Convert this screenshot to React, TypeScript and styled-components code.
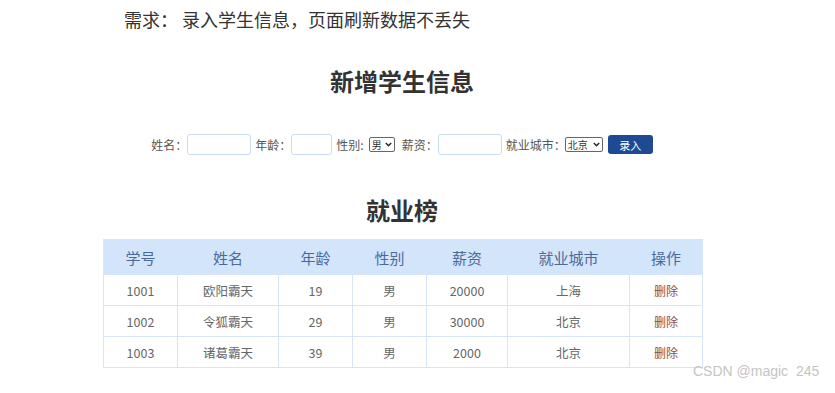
import React from "react";
import styled, { createGlobalStyle } from "styled-components";

const GlobalStyle = createGlobalStyle`
  body {
    margin: 0;
    background: #ffffff;
    font-family: "Noto Sans CJK SC", "Noto Sans", sans-serif;
  }
`;

type Student = {
  id: string;
  name: string;
  age: number;
  gender: string;
  salary: number;
  city: string;
};

const students: Student[] = [
  { id: "1001", name: "欧阳霸天", age: 19, gender: "男", salary: 20000, city: "上海" },
  { id: "1002", name: "令狐霸天", age: 29, gender: "男", salary: 30000, city: "北京" },
  { id: "1003", name: "诸葛霸天", age: 39, gender: "男", salary: 2000, city: "北京" },
];

const columns = [
  { title: "学号", width: 74 },
  { title: "姓名", width: 101 },
  { title: "年龄", width: 74 },
  { title: "性别", width: 74 },
  { title: "薪资", width: 81 },
  { title: "就业城市", width: 122 },
  { title: "操作", width: 73 },
];

const SmallSelect = ({
  width,
  options,
  value,
  ml,
  mr,
}: {
  width: number;
  options: string[];
  value: string;
  ml: number;
  mr: number;
}) => (
  <SelectBox $ml={ml} $mr={mr}>
    <Select $w={width} defaultValue={value}>
      {options.map((o) => (
        <option key={o}>{o}</option>
      ))}
    </Select>
    <Chevron width="7" height="5" viewBox="0 0 7 5">
      <path d="M0.8 1 L3.5 3.7 L6.2 1" fill="none" stroke="#222" strokeWidth="1.4" />
    </Chevron>
  </SelectBox>
);

export default function App() {
  return (
    <Page>
      <GlobalStyle />
      <Content>
        <Requirement>需求： 录入学生信息，页面刷新数据不丢失</Requirement>
        <Title $top={34}>新增学生信息</Title>
        <Form>
          <Field>
            <Label>姓名：</Label>
            <TextInput $w={64} />
          </Field>
          <Field>
            <Label>年龄：</Label>
            <TextInput $w={41} />
          </Field>
          <Field>
            <Label>性别:</Label>
            <SmallSelect width={26} options={["男", "女"]} value="男" ml={5} mr={3} />
          </Field>
          <Field>
            <Label>薪资：</Label>
            <TextInput $w={64} />
          </Field>
          <Field>
            <Label>就业城市：</Label>
            <SmallSelect
              width={38}
              options={["北京", "上海", "广州", "深圳"]}
              value="北京"
              ml={-1}
              mr={1}
            />
          </Field>
          <SubmitButton>录入</SubmitButton>
        </Form>
        <Title $top={39}>就业榜</Title>
        <Table>
          <colgroup>
            {columns.map((c) => (
              <col key={c.title} style={{ width: c.width }} />
            ))}
          </colgroup>
          <thead>
            <tr>
              {columns.map((c) => (
                <Th key={c.title}>{c.title}</Th>
              ))}
            </tr>
          </thead>
          <tbody>
            {students.map((s) => (
              <tr key={s.id}>
                <Td>{s.id}</Td>
                <Td>{s.name}</Td>
                <Td>{s.age}</Td>
                <Td>{s.gender}</Td>
                <Td>{s.salary}</Td>
                <Td>{s.city}</Td>
                <Td>
                  <DeleteLink href="#">删除</DeleteLink>
                </Td>
              </tr>
            ))}
          </tbody>
        </Table>
      </Content>
      <Watermark>CSDN @magic  245</Watermark>
    </Page>
  );
}

const Page = styled.div`
  position: relative;
  width: 835px;
  height: 393px;
  overflow: hidden;
  color: #333;
`;

const Content = styled.div`
  width: 804px;
`;

const Requirement = styled.div`
  margin: 7px 0 0 124px;
  font-size: 18px;
  line-height: 24px;
  color: #333;
`;

const Title = styled.h2<{ $top: number }>`
  margin: ${(p) => p.$top}px 0 0;
  text-align: center;
  font-size: 24px;
  line-height: 32px;
  font-weight: bold;
  color: #333;
`;

const Form = styled.div`
  display: flex;
  justify-content: center;
  align-items: center;
  gap: 4px;
  height: 21px;
  margin-top: 37px;
`;

const Field = styled.div`
  display: flex;
  align-items: center;
`;

const Label = styled.span`
  font-size: 12px;
  line-height: 21px;
  color: #555;
  white-space: nowrap;
`;

const TextInput = styled.input<{ $w: number }>`
  box-sizing: border-box;
  width: ${(p) => p.$w}px;
  height: 21px;
  padding: 0 4px;
  border: 1px solid #c9dcf3;
  border-radius: 3px;
  outline: none;
  background: #fff;
`;

const SelectBox = styled.div<{ $ml: number; $mr: number }>`
  position: relative;
  display: flex;
  margin: 0 ${(p) => p.$mr}px 0 ${(p) => p.$ml}px;
`;

const Select = styled.select<{ $w: number }>`
  appearance: none;
  box-sizing: border-box;
  width: ${(p) => p.$w}px;
  height: 15px;
  padding: 0 0 0 2px;
  font-size: 10px;
  line-height: 13px;
  font-family: "Noto Sans CJK SC", sans-serif;
  border: 1px solid #666;
  border-radius: 2px;
  background: #fff;
  color: #333;
  outline: none;
`;

const Chevron = styled.svg`
  position: absolute;
  right: 3px;
  top: 5px;
  pointer-events: none;
`;

const SubmitButton = styled.button`
  box-sizing: border-box;
  width: 45px;
  height: 19px;
  padding: 0;
  border: none;
  border-radius: 3px;
  background: #1d4a92;
  color: #fff;
  font-size: 11px;
  font-family: "Noto Sans CJK SC", sans-serif;
  cursor: pointer;
`;

const Table = styled.table`
  margin: 13px 0 0 103px;
  width: 599px;
  border-collapse: collapse;
  table-layout: fixed;
  border: 1px solid #d6e6f8;
`;

const Th = styled.th`
  height: 34px;
  padding: 0;
  background: #d3e5fb;
  border: 1px solid #d6e6f8;
  color: #4b6a9a;
  font-size: 15px;
  font-weight: normal;
`;

const Td = styled.td`
  height: 30px;
  padding: 0;
  border: 1px solid #d6e6f8;
  text-align: center;
  color: #666;
  font-size: 12.5px;
`;

const DeleteLink = styled.a`
  color: #8a4f4f;
  text-decoration: none;
  font-size: 12px;
`;

const Watermark = styled.div`
  position: absolute;
  left: 693px;
  top: 363px;
  font-family: "Liberation Sans", Arial, sans-serif;
  font-size: 14px;
  color: #c4c4c4;
  white-space: pre;
`;
